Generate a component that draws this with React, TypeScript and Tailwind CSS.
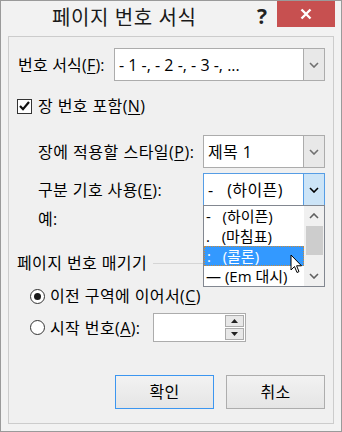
import React from 'react';

const FONT = { fontFamily: '"Open Sans", "Noto Sans CJK KR", sans-serif' };

const Chevron = ({ up = false, color = '#606060' }: { up?: boolean; color?: string }) => (
  <svg width="10" height="6" viewBox="0 0 10 6" className={up ? 'rotate-180' : ''}>
    <path d="M1 1 L5 5 L9 1" fill="none" stroke={color} strokeWidth="1.6" />
  </svg>
);

const Key = ({ k }: { k: string }) => (
  <>
    (<span className="underline underline-offset-2">{k}</span>)
  </>
);

const Combo = ({ text, width, focused = false, plain = false, children }: { text: string; width: string; focused?: boolean; plain?: boolean; children?: React.ReactNode }) => (
  <div className={`relative flex h-[33px] ${width} border bg-white ${focused ? 'border-[#569de5]' : 'border-[#acacac]'}`}>
    <div className={`flex-1 flex items-center pl-[4px] text-[16px] leading-[20px] text-black whitespace-pre ${plain ? 'tracking-normal' : ''}`}>{text}</div>
    <div className={`w-[21px] flex items-center justify-center border-l ${focused ? 'bg-[#cce4f7] border-[#569de5]' : 'bg-[#e8e8e8] border-[#acacac]'}`}>
      <Chevron color={focused ? '#000' : '#707070'} />
    </div>
    {children}
  </div>
);

const items = ['-   (하이픈)', '.   (마침표)', ':   (콜론)', '— (Em 대시)'];

const DropList = () => (
  <div className="absolute left-[-1px] top-[31px] w-[122px] h-[82px] border border-[#828790] bg-white flex z-10 tracking-normal">
    <div className="flex-1 flex flex-col">
      {items.map((t, i) => (
        <div
          key={t}
          className={`h-[20px] flex items-center pl-[2px] text-[15px] leading-[18px] whitespace-pre ${i === 2 ? 'bg-[#3399ff] text-white border border-dotted border-[#c98a3a]' : 'text-black'}`}
        >
          {t}
        </div>
      ))}
    </div>
    <div className="w-[20px] bg-[#f0f0f0] flex flex-col items-center">
      <div className="h-[20px] flex items-center justify-center"><Chevron up /></div>
      <div className="w-[17px] h-[29px] bg-[#cdcdcd]" />
      <div className="flex-1" />
      <div className="h-[20px] flex items-center justify-center"><Chevron /></div>
    </div>
  </div>
);

const Cursor = () => (
  <svg className="absolute left-[289px] top-[253px] z-20" width="13" height="20" viewBox="0 0 13 20">
    <path d="M1 1 L1 16 L4.5 12.5 L7 18.5 L9 17.6 L6.6 11.8 L11.5 11.8 Z" fill="#fff" stroke="#000" strokeWidth="1" strokeLinejoin="round" />
  </svg>
);

const Radio = ({ on }: { on?: boolean }) => (
  <div className="w-[15px] h-[15px] rounded-full border border-[#333] bg-white flex items-center justify-center">
    {on && <div className="w-[7px] h-[7px] rounded-full bg-[#1a1a1a]" />}
  </div>
);

export default function App() {
  return (
    <div style={FONT} className="relative w-[342px] h-[432px] border border-[#9a9a9a] bg-[#f2f2f2] flex flex-col text-black overflow-hidden">
      {/* title bar */}
      <div className="h-[35px] flex items-start">
        <div className="ml-[51px] mt-[4px] text-[20px] leading-[26px] text-[#1a1a1a] tracking-[0.6px]">페이지 번호 서식</div>
        <div className="ml-auto mt-[3px] mr-[10px] text-[21px] leading-[24px] font-bold text-[#222]">?</div>
        <div className="w-[58px] h-[26px] mr-[6px] bg-[#c75050] flex items-center justify-center">
          <svg width="12" height="12" viewBox="0 0 12 12">
            <path d="M1.5 1.5 L10.5 10.5 M10.5 1.5 L1.5 10.5" stroke="#fff" strokeWidth="2.4" />
          </svg>
        </div>
      </div>

      {/* content panel */}
      <div className="ml-[7px] w-[326px] h-[388px] border border-[#cccccc] bg-[#f0f0f0] flex flex-col pr-[8px] text-[16px] leading-[20px] tracking-[0.4px]">
        <div className="mt-[11px] flex items-center justify-between pl-[9px]">
          <span className="tracking-[0.2px]">번호 서식<Key k="F" />:</span>
          <Combo text="- 1 -, - 2 -, - 3 -, ..." width="w-[211px]" plain />
        </div>

        <div className="mt-[15px] flex items-center pl-[8px] gap-[6px]">
          <div className="w-[15px] h-[15px] border border-[#333] bg-white flex items-center justify-center">
            <svg width="11" height="10" viewBox="0 0 11 10">
              <path d="M1 5 L4 8.2 L10 1" fill="none" stroke="#111" strokeWidth="2.2" />
            </svg>
          </div>
          <span>장 번호 포함<Key k="N" /></span>
        </div>

        <div className="mt-[19px] flex items-center justify-between pl-[29px]">
          <span className="tracking-[0.5px]">장에 적용할 스타일<Key k="P" />:</span>
          <Combo text="제목 1" width="w-[122px]" />
        </div>

        <div className="mt-[5px] flex items-center justify-between pl-[29px]">
          <span>구분 기호 사용<Key k="E" />:</span>
          <Combo text="-   (하이픈)" width="w-[122px]" focused>
            <DropList />
          </Combo>
        </div>

        <div className="mt-[3px] pl-[29px]">예:</div>

        <div className="mt-[24px] flex items-center pl-[8px] gap-[6px]">
          <span>페이지 번호 매기기</span>
          <div className="flex-1 h-px bg-[#d5d5d5]" />
        </div>

        <div className="mt-[13px] flex items-center pl-[21px] gap-[5px]">
          <Radio on />
          <span>이전 구역에 이어서<Key k="C" /></span>
        </div>

        <div className="mt-[7px] flex items-center pl-[21px]">
          <Radio />
          <span className="ml-[5px] w-[103px]">시작 번호<Key k="A" />:</span>
          <div className="w-[93px] h-[29px] border border-[#acacac] bg-white flex justify-end p-[1px]">
            <div className="w-[19px] flex flex-col gap-px">
              <div className="flex-1 border border-[#acacac] bg-[#e8e8e8] flex items-center justify-center">
                <svg width="7" height="4" viewBox="0 0 7 4"><path d="M0 4 L3.5 0 L7 4 Z" fill="#222" /></svg>
              </div>
              <div className="flex-1 border border-[#acacac] bg-[#e8e8e8] flex items-center justify-center">
                <svg width="7" height="4" viewBox="0 0 7 4"><path d="M0 0 L3.5 4 L7 0 Z" fill="#222" /></svg>
              </div>
            </div>
          </div>
        </div>

        <div className="mt-[33px] flex justify-end gap-[12px]">
          <button className="w-[99px] h-[34px] border border-[#3c96f0] bg-gradient-to-b from-[#f2f2f2] to-[#e5e5e5] text-[16px]">확인</button>
          <button className="w-[99px] h-[34px] border border-[#adadad] bg-gradient-to-b from-[#f2f2f2] to-[#e5e5e5] text-[16px]">취소</button>
        </div>
      </div>

      <Cursor />
    </div>
  );
}
